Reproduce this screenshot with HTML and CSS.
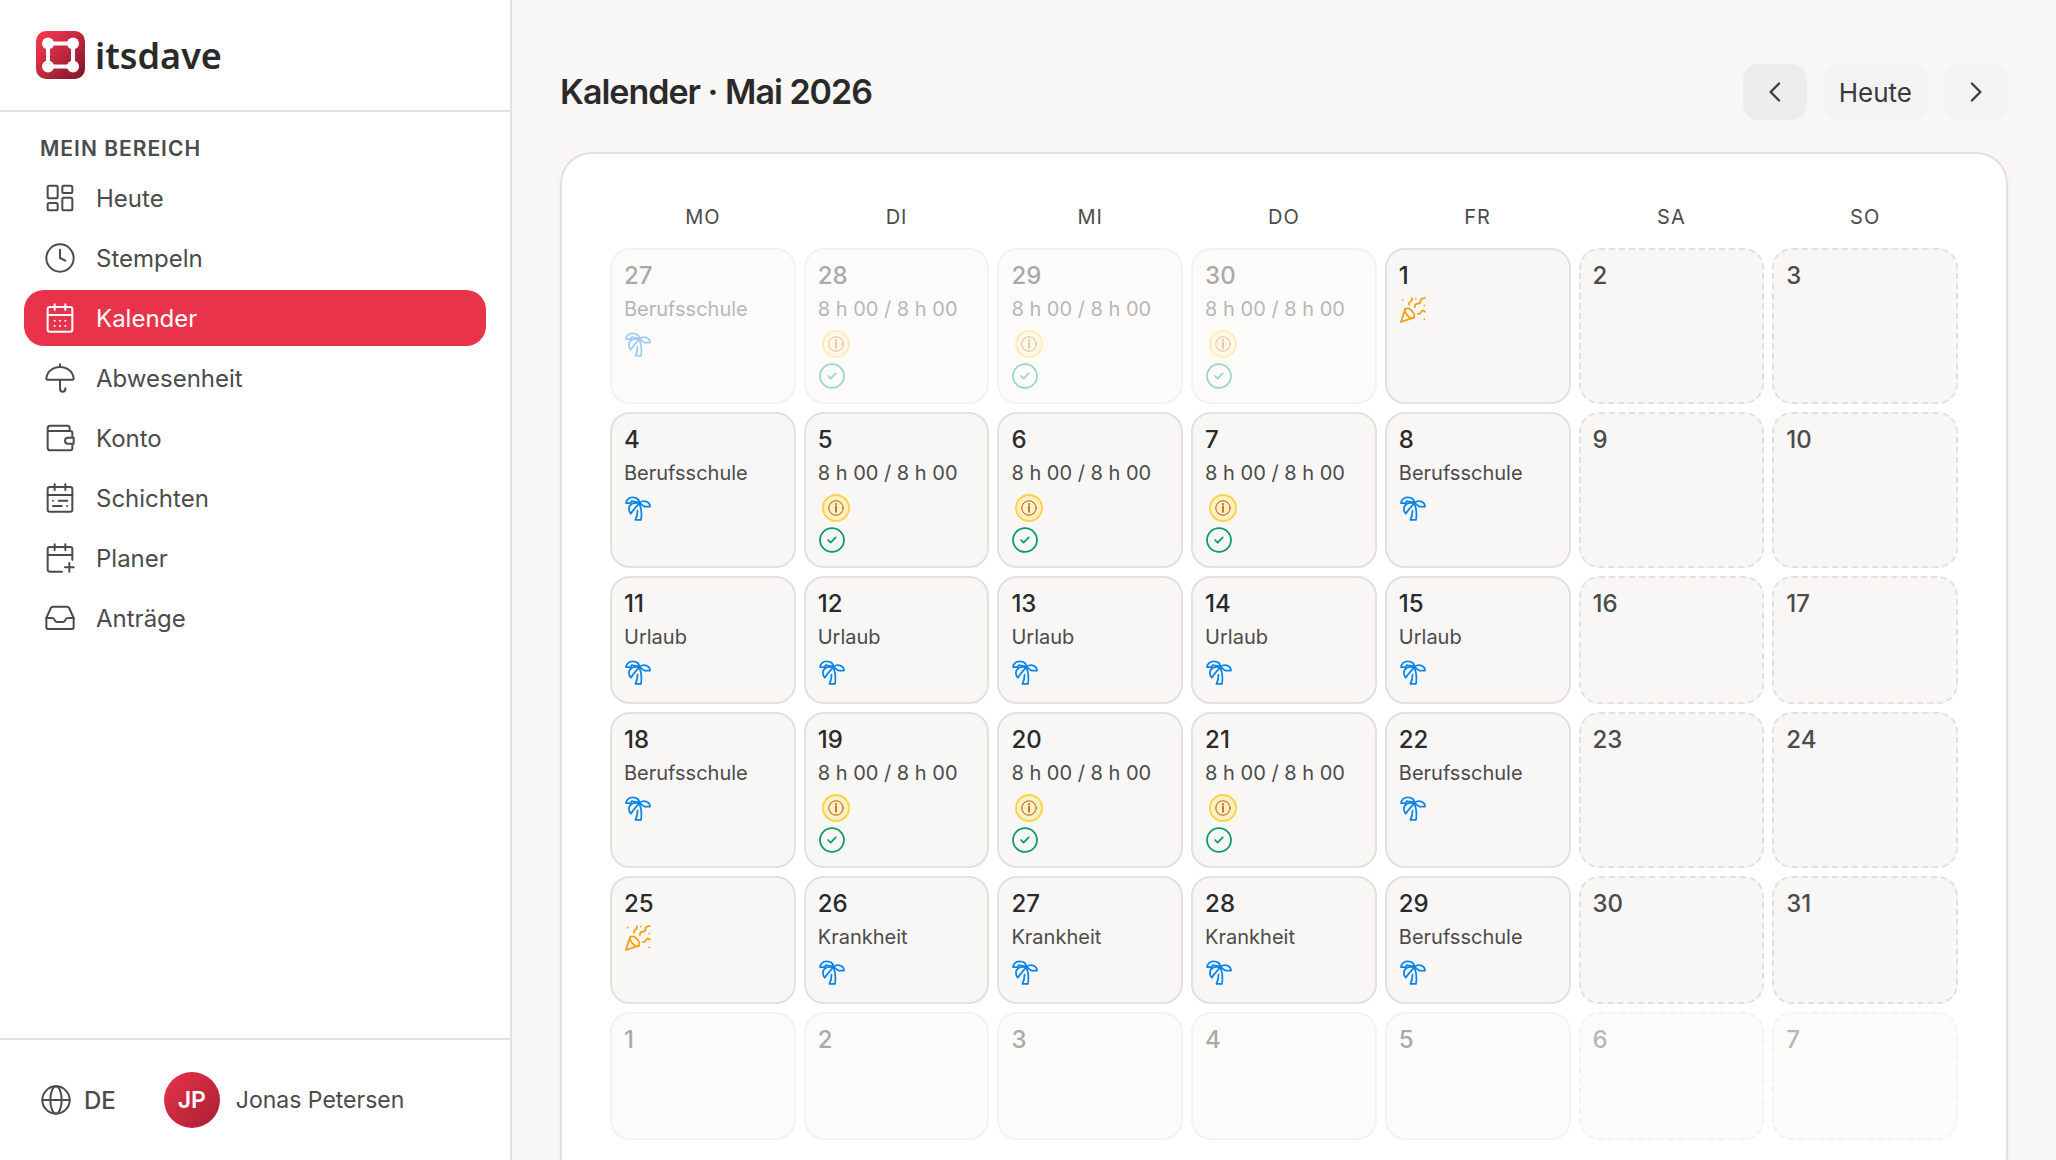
FILE: index.html
```html
<!DOCTYPE html>
<html lang="de">
<head>
  <meta charset="UTF-8" />
  <meta name="viewport" content="width=device-width, initial-scale=1" />
  <title>Kalender - itsdave</title>
  <link rel="stylesheet" href="styles.css">
</head>
<body>

<!-- icons -->
<svg class="sprite" aria-hidden="true">
  <symbol id="i-dashboard" viewBox="0 0 24 24">
    <rect x="2.75" y="2.75" width="7.5" height="9.5" rx="1.2" />
    <rect x="13.75" y="2.75" width="7.5" height="5.5" rx="1.2" />
    <rect x="2.75" y="15.75" width="7.5" height="5.5" rx="1.2" />
    <rect x="13.75" y="11.75" width="7.5" height="9.5" rx="1.2" />
  </symbol>
  <symbol id="i-clock" viewBox="0 0 24 24">
    <circle cx="12" cy="12" r="10.25" />
    <path d="M12 5.75V12l4 2" />
  </symbol>
  <symbol id="i-calendar" viewBox="0 0 24 24">
    <rect x="2.75" y="3.75" width="18.5" height="18.5" rx="1.5" />
    <path d="M2.75 9.75h18.5M8 1.75V6M16 1.75V6" />
    <path d="M8 14h.01M12 14h.01M16 14h.01M8 18h.01M12 18h.01M16 18h.01" />
  </symbol>
  <symbol id="i-umbrella" viewBox="0 0 24 24">
    <path d="M12 3.75c-5.6 0-9.8 3.7-10.2 8.6-.1.5.2.9.7.9h19c.5 0 .8-.4.7-.9-.4-4.9-4.600-8.600-10.200-8.600zM12 1.75v2M12 13.250v7a2 2 0 0 0 4 0v-.5" />
  </symbol>
  <symbol id="i-wallet" viewBox="0 0 24 24">
    <path d="M21.25 10.75v-2.500c0-.8-.7-1.500-1.500-1.500h-17M19.25 6.75v-2.500c0-.8-.6-1.500-1.400-1.500H4.75c-1.100 0-2 .9-2 2v14.500c0 1.100.9 2 2 2h15c.8 0 1.500-.7 1.500-1.500v-2.500" />
    <path d="M22.25 11.750h-4.250a2.250 2.250 0 0 0 0 4.500h4.250z" />
  </symbol>
  <symbol id="i-shifts" viewBox="0 0 24 24">
    <rect x="2.75" y="3.75" width="18.5" height="18.5" rx="1.5" />
    <path d="M2.75 9.75h18.5M8 1.75V6M16 1.75V6" />
    <path d="M6.75 14h.01M11 14h6.5M6.75 18h6.5M17.25 18h.01" />
  </symbol>
  <symbol id="i-plan" viewBox="0 0 24 24">
    <path d="M13.5 22.25H4.25c-.8 0-1.5-.7-1.5-1.5V5.25c0-.8.7-1.5 1.5-1.5h15.5c.8 0 1.5.7 1.5 1.5v8M2.75 9.75h18.5M8 1.75V6M16 1.75V6M19 15.75v6.5M15.75 19h6.5" />
  </symbol>
  <symbol id="i-inbox" viewBox="0 0 24 24">
    <path d="M1.75 12v6.7c0 .9.7 1.6 1.6 1.6h17.3c.9 0 1.6-.7 1.6-1.6V12l-3.3-7.3c-.3-.7-1-1.2-1.8-1.2H6.85c-.8 0-1.5.5-1.8 1.2z" />
    <path d="M1.75 12h4.5c.7 0 1.2.4 1.5 1l.5 1c.3.6.8 1 1.5 1h4.5c.7 0 1.2-.4 1.5-1l.5-1c.3-.6.8-1 1.5-1h4.500" />
  </symbol>
  <symbol id="i-globe" viewBox="0 0 24 24">
    <circle cx="12" cy="12" r="10.25" />
    <ellipse cx="12" cy="12" rx="4.25" ry="10.25" />
    <path d="M1.75 12h20.5" />
  </symbol>
  <symbol id="i-prev" viewBox="0 0 24 24"><path d="M15.5 4.75 8.25 12l7.25 7.25" /></symbol>
  <symbol id="i-next" viewBox="0 0 24 24"><path d="M8.5 4.75 15.75 12 8.5 19.25" /></symbol>
  <symbol id="i-palm" viewBox="0 0 24 24">
    <path d="M1.8 7.9C1.800 5 4.200 2.900 7.300 2.900c3.200 0 5.700 1.700 6 4.800-1.400-1-3.200-1.300-5-1.200l-1.500-.5-1.300 1.900z" />
    <path d="M13.300 7.500c3.800-2.700 8.900-.9 9 3.300h-4.800l-1.500-1z" />
    <path d="M13 8c-4.500-1.200-8.700.8-8.800 4.600 0 1.700.5 3.100 1.600 4.300C7.700 13.700 10.500 11 13 8z" />
    <path d="M11.600 14.300c0 2.700-.6 5.300-1.800 7.900h4.800c.7-4.900.4-9.500-1.300-13.700" />
  </symbol>
  <symbol id="i-party" viewBox="0 0 24 24">
    <path d="M5.300 11.200 1.600 22.300l11.200-3.700" />
    <ellipse cx="9.200" cy="14.800" rx="5.200" ry="2.700" transform="rotate(48 9.200 14.800)" />
    <path d="M11 1.900c.6 1.400 0 2.300-1 2.800s-1.600 1.300-1.300 2.700M22.200 1.900c-2.200-.2-3.700.6-3.800 2.500-.1 1.500-.8 2.200-2.300 2.200-1.700 0-2.700 1-2.500 3M22.200 13.300c-1.200-1.200-2.600-1-3.300.5-.6 1.300-1.600 1.800-2.700 1.400" />
    <path d="M3.100 3.200h.01M14.400 2.200h.01M21.700 8.200h.01M21.700 20h.01" />
  </symbol>
  <symbol id="i-info" viewBox="0 0 24 24">
    <circle cx="12" cy="12" r="10.8" />
    <path d="M12 9.500v8.500M12 5.600v1.200" stroke-width="2.400" />
  </symbol>
  <symbol id="i-check" viewBox="0 0 24 24">
    <circle cx="12" cy="12" r="10.25" />
    <path d="m8.600 12 2.200 2.200 4.400-4.400" />
  </symbol>
</svg>

<aside class="sidebar">
  <a href="#" class="brand">
    <svg class="brand-logo" viewBox="0 0 49 48" aria-hidden="true">
      <defs>
        <linearGradient id="brandGradient" x1="0" y1="0" x2="1" y2="1">
          <stop offset="0" stop-color="#f5364f" />
          <stop offset="0.25" stop-color="#e33147" />
          <stop offset="1" stop-color="#7a142a" />
        </linearGradient>
      </defs>
      <rect width="49" height="48" rx="10" fill="url(#brandGradient)" />
      <rect x="12" y="12.5" width="25" height="23" fill="none" stroke="#fff" stroke-width="4" />
      <g fill="#fff">
        <circle cx="12" cy="12.5" r="6" />
        <circle cx="37" cy="12.5" r="6" />
        <circle cx="12" cy="35.5" r="6" />
        <circle cx="37" cy="35.5" r="6" />
      </g>
    </svg>
    <span class="brand-name">itsdave</span>
  </a>

  <nav class="nav">
    <h2 class="nav-title">Mein Bereich</h2>
    <a href="#" class="nav-item"><svg class="icon"><use href="#i-dashboard" /></svg>Heute</a>
    <a href="#" class="nav-item"><svg class="icon"><use href="#i-clock" /></svg>Stempeln</a>
    <a href="#" class="nav-item active" aria-current="page"><svg class="icon"><use href="#i-calendar" /></svg>Kalender</a>
    <a href="#" class="nav-item"><svg class="icon"><use href="#i-umbrella" /></svg>Abwesenheit</a>
    <a href="#" class="nav-item"><svg class="icon"><use href="#i-wallet" /></svg>Konto</a>
    <a href="#" class="nav-item"><svg class="icon"><use href="#i-shifts" /></svg>Schichten</a>
    <a href="#" class="nav-item"><svg class="icon"><use href="#i-plan" /></svg>Planer</a>
    <a href="#" class="nav-item"><svg class="icon"><use href="#i-inbox" /></svg>Anträge</a>
  </nav>

  <div class="sidebar-footer">
    <button type="button" class="lang"><svg class="icon"><use href="#i-globe" /></svg>DE</button>
    <button type="button" class="user"><span class="avatar">JP</span>Jonas Petersen</button>
  </div>
</aside>

<main class="main">
  <header class="page-head">
    <h1>Kalender · Mai 2026</h1>
    <div class="pager">
      <button type="button" class="btn btn-arrow current" aria-label="Vorheriger Monat"><svg class="arrow"><use href="#i-prev" /></svg></button>
      <button type="button" class="btn">Heute</button>
      <button type="button" class="btn btn-arrow" aria-label="Nächster Monat"><svg class="arrow"><use href="#i-next" /></svg></button>
    </div>
  </header>

  <section class="card">
    <table class="calendar">
      <thead>
        <tr><th>Mo</th><th>Di</th><th>Mi</th><th>Do</th><th>Fr</th><th>Sa</th><th>So</th></tr>
      </thead>
      <tbody id="days"></tbody>
    </table>
  </section>
</main>

<script>
  const icon = name => `<svg class="day-icon ${name}"><use href="#i-${name}" /></svg>`;
  const worked = {
    label: "8 h 00 / 8 h 00",
    icons: `<span class="info-badge"><svg><use href="#i-info" /></svg></span>` + icon("check")
  };
  const school = { label: "Berufsschule", icons: icon("palm") };
  const vacation = { label: "Urlaub", icons: icon("palm") };
  const sick = { label: "Krankheit", icons: icon("palm") };
  const holiday = { icons: icon("party") };

  // Monday to Friday of each week, weekends stay empty
  const weeks = [
    [school, worked, worked, worked, holiday],
    [school, worked, worked, worked, school],
    [vacation, vacation, vacation, vacation, vacation],
    [school, worked, worked, worked, school],
    [holiday, sick, sick, sick, school],
    []
  ];

  const date = new Date(2026, 3, 27);
  let html = "";

  weeks.forEach(week => {
    html += "<tr>";
    for (let i = 0; i < 7; i++) {
      const entry = week[i] || {};
      const classes = ["day"];
      if (i > 4) classes.push("weekend");
      if (date.getMonth() !== 4) classes.push("outside");
      html += `<td class="${classes.join(" ")}"><div class="day-number">${date.getDate()}</div>`;
      if (entry.label) html += `<div class="day-label">${entry.label}</div>`;
      if (entry.icons) html += `<div class="day-icons">${entry.icons}</div>`;
      html += "</td>";
      date.setDate(date.getDate() + 1);
    }
    html += "</tr>";
  });

  document.getElementById("days").innerHTML = html;
</script>

</body>
</html>
```
FILE: styles.css
```css
* {
  box-sizing: border-box;
}
body {
  margin: 0;
  display: flex;
  height: 100vh;
  overflow: hidden;
  background: #f8f7f5;
  color: #4b4b4b;
  font-family: Inter, "Liberation Sans", sans-serif;
  font-size: 24px;
}
a {
  color: inherit;
  text-decoration: none;
}
button {
  border: none;
  background: none;
  padding: 0;
  color: inherit;
  font: inherit;
  cursor: pointer;
}
svg {
  display: block;
  fill: none;
  stroke: currentColor;
  stroke-width: 1.5;
  stroke-linecap: round;
  stroke-linejoin: round;
}
.sprite {
  display: none;
}
.icon {
  width: 32px;
  height: 32px;
}

/* sidebar */
.sidebar {
  flex: 0 0 512px;
  display: flex;
  flex-direction: column;
  background: #fff;
  border-right: 2px solid #e4e0dc;
}
.brand {
  display: flex;
  align-items: center;
  gap: 10px;
  height: 112px;
  padding: 0 36px;
  border-bottom: 2px solid #e4e0dc;
}
.brand-logo {
  width: 49px;
  height: 48px;
  stroke: none;
}
.brand-name {
  font-family: "Noto Sans", "Open Sans", sans-serif;
  font-size: 36px;
  font-weight: 600;
  color: #2a2a2a;
}
.nav {
  flex: 1;
  display: flex;
  flex-direction: column;
  gap: 4px;
  padding: 20px 24px;
}
.nav-title {
  margin: 0;
  padding: 0 16px;
  font-size: 21px;
  line-height: 34px;
  font-weight: 600;
  letter-spacing: 1px;
  text-transform: uppercase;
}
.nav-item {
  display: flex;
  align-items: center;
  gap: 20px;
  height: 56px;
  padding: 0 20px;
  border-radius: 20px;
}
.nav-item.active {
  background: #e8334a;
  color: #fff;
}
.sidebar-footer {
  display: flex;
  align-items: center;
  gap: 48px;
  padding: 32px 40px;
  border-top: 2px solid #e4e0dc;
}
.lang {
  display: flex;
  align-items: center;
  gap: 12px;
  font-weight: 500;
}
.user {
  display: flex;
  align-items: center;
  gap: 16px;
  font-size: 23px;
}
.avatar {
  width: 56px;
  height: 56px;
  border-radius: 50%;
  background: linear-gradient(135deg, #e8334a, #a81e33);
  color: #fff;
  font-weight: 600;
  line-height: 56px;
}

/* page */
.main {
  flex: 1;
  min-width: 0;
  padding: 64px 48px;
  overflow-y: auto;
  scrollbar-width: none;
}
.page-head {
  display: flex;
  align-items: center;
  justify-content: space-between;
  margin-bottom: 32px;
}
h1 {
  margin: 0;
  font-size: 34px;
  line-height: 56px;
  font-weight: 600;
  letter-spacing: -1px;
  color: #2a2a2a;
}
.pager {
  display: flex;
  gap: 16px;
}
.btn {
  display: flex;
  align-items: center;
  justify-content: center;
  height: 56px;
  padding: 0 16px;
  border-radius: 16px;
  background: #f3f3f3;
  color: #3a3a3a;
  font-size: 26px;
}
.btn-arrow {
  width: 64px;
}
.btn.current {
  background: #ececec;
}
.arrow {
  width: 28px;
  height: 28px;
  stroke-width: 2;
}
.card {
  padding: 40px;
  background: #fff;
  border: 2px solid #e4e0dc;
  border-radius: 32px;
  box-shadow: 0 2px 4px rgba(0, 0, 0, 0.05);
}

/* calendar */
.calendar {
  width: 100%;
  table-layout: fixed;
  border-collapse: separate;
  border-spacing: 8px;
}
.calendar th {
  padding: 0 0 8px;
  font-size: 20px;
  line-height: 30px;
  font-weight: 400;
  letter-spacing: 1px;
  text-transform: uppercase;
}
.day {
  height: 128px;
  padding: 12px;
  vertical-align: top;
  background: #f8f7f5;
  border: 2px solid #e4e1dd;
  border-radius: 20px;
}
.day.weekend {
  border-style: dashed;
}
.day.outside {
  opacity: 0.4;
}
.day-number {
  line-height: 28px;
  font-weight: 500;
  color: #2a2a2a;
}
.weekend .day-number {
  color: #4b4b4b;
}
.day-label {
  margin-top: 4px;
  font-size: 20px;
  line-height: 30px;
  white-space: nowrap;
}
.day-icons {
  display: flex;
  flex-direction: column;
  gap: 4px;
  margin-top: 6px;
}
.day-icon {
  width: 28px;
  height: 28px;
}
.palm {
  color: #0a84e8;
}
.party {
  color: #f59e0b;
}
.check {
  color: #0a9a6b;
}
.info-badge {
  display: flex;
  align-items: center;
  justify-content: center;
  width: 28px;
  height: 28px;
  margin-left: 4px;
  border: 2px solid #fcd34d;
  border-radius: 50%;
  background: #fef0c3;
  color: #b8560f;
}
.info-badge svg {
  width: 16px;
  height: 16px;
}
```
